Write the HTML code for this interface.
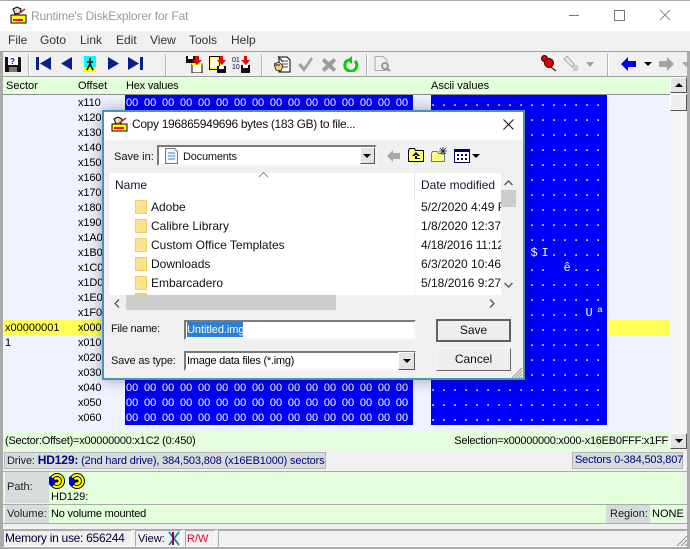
<!DOCTYPE html>
<html><head><meta charset="utf-8"><style>
html,body{margin:0;padding:0;background:#f0f0f0}
#w{position:relative;width:690px;height:549px;overflow:hidden;background:#f0f0f0;font:11px/15px "Liberation Sans",sans-serif;color:#000}
#w div,#w svg{position:absolute}
.t{white-space:pre}
.m{top:33px;font-size:12px;color:#333;line-height:15px}
.o{left:78px;white-space:pre;letter-spacing:-.1px}
.hx{left:126px;color:#fff;white-space:pre;word-spacing:2.7px;width:287px;overflow:hidden}
.as{left:431px;width:176px;color:#fff;font:12px/15px "Liberation Mono",monospace;letter-spacing:3.8px;white-space:pre;overflow:hidden;text-indent:0}
.as span{position:relative;left:2px}
.sep{top:54px;height:23px;background:#b4b4b4;border-right:1px solid #fff;width:1px}
.lb{font-size:12px;line-height:15px;white-space:pre;color:#111}
.fold{left:135px;width:12px;height:14px;background:#ffe08c;border:1px solid #f2cc6e;box-sizing:border-box}
.sunk{background:#fff;box-sizing:border-box;border:2px solid;border-color:#7a7a7a #f6f6f6 #f6f6f6 #7a7a7a}
.btn{left:436px;width:75px;box-sizing:border-box;background:#eee;border:1px solid;border-color:#f8f8f8 #666 #666 #f8f8f8;text-align:center;font-size:12px;color:#111}
.drop{background:#e4e4e4;border:1px solid;border-color:#fff #555 #555 #fff;box-sizing:border-box}
.tri{width:0;height:0;border-left:4px solid transparent;border-right:4px solid transparent;border-top:4px solid #000}
.pn{top:530px;height:17px;box-sizing:border-box;border:1px solid;border-color:#aaa #fff #fff #aaa}
</style></head><body><div id="w">

<!-- title -->
<div style="left:0;top:0;width:690px;height:31px;background:#fff"></div>
<div style="left:0;top:0;width:690px;height:1px;background:#aaa"></div>
<svg style="left:10px;top:6px" width="17" height="18" viewBox="0 0 17 18"><rect x="1" y="9" width="15" height="8" fill="#ffff00" stroke="#000"/><rect x="3" y="13" width="10" height="2" fill="#e00"/><path d="M3 3l4-2 4 2-1 4-5 1z" fill="#ddd" stroke="#000"/><path d="M7 9l8-6" stroke="#c22" stroke-width="1.5"/></svg>
<div class="t" style="left:31px;top:9px;font-size:12px;color:#999;letter-spacing:-.17px">Runtime's DiskExplorer for Fat</div>
<div style="left:569px;top:15px;width:10px;height:1px;background:#777"></div>
<div style="left:614px;top:10px;width:9px;height:9px;border:1px solid #777"></div>
<svg style="left:659px;top:9px" width="12" height="12"><path d="M1 1l10 10M11 1L1 11" stroke="#888" fill="none"/></svg>

<!-- menu -->
<div class="m" style="left:8px">File</div><div class="m" style="left:40px">Goto</div><div class="m" style="left:80px">Link</div><div class="m" style="left:116px">Edit</div><div class="m" style="left:150px">View</div><div class="m" style="left:189px">Tools</div><div class="m" style="left:231px">Help</div>
<div style="left:0;top:51px;width:690px;height:1px;background:#a0a0a0"></div>

<!-- toolbar -->
<svg style="left:5px;top:56px" width="16" height="16" viewBox="0 0 16 16"><path d="M0 1h15l1 1v14H0z" fill="#111"/><rect x="3" y="1" width="10" height="8" fill="#fff"/><rect x="4" y="11" width="8" height="5" fill="#777"/><text x="5" y="8" font-size="8" font-weight="bold" fill="#00c" font-family="Liberation Sans">?</text></svg>
<div class="sep" style="left:28px"></div>
<svg style="left:36px;top:57px" width="16" height="13"><path d="M0 0h3v13H0zM15 0v13L4 6.5z" fill="#0a1f8f"/></svg>
<svg style="left:61px;top:57px" width="12" height="13"><path d="M11 0v13L0 6.5z" fill="#0a1f8f"/></svg>
<svg style="left:84px;top:56px" width="12" height="16"><rect width="12" height="11" fill="#0ff"/><rect y="11" width="12" height="5" fill="#ff0"/><path d="M6 2v6M6 8l-3 6M6 8l3 6M3 6h6" stroke="#000" stroke-width="1.6" fill="none"/></svg>
<svg style="left:107px;top:57px" width="12" height="13"><path d="M1 0v13L12 6.5z" fill="#0a1f8f"/></svg>
<svg style="left:128px;top:57px" width="16" height="13"><path d="M0 0v13L11 6.5zM12 0h3v13h-3z" fill="#0a1f8f"/></svg>
<div class="sep" style="left:165px"></div>
<svg style="left:186px;top:56px" width="17" height="17"><rect x="0" y="0" width="9" height="7" fill="#111"/><rect x="2" y="0" width="5" height="3" fill="#fff"/><rect x="6" y="8" width="10" height="9" fill="#fff" stroke="#000"/><rect x="6" y="7" width="10" height="2" fill="#ff0"/><path d="M9 0h4v4h3l-5 5-5-5h3z" fill="#e00"/></svg>
<svg style="left:209px;top:56px" width="17" height="17"><rect x=".5" y="1.5" width="9" height="11" fill="#fff" stroke="#ff0" stroke-width="2"/><rect x=".5" y=".5" width="10" height="13" fill="none" stroke="#000"/><rect x="8" y="10" width="9" height="7" fill="#111"/><rect x="10" y="10" width="5" height="3" fill="#fff"/><path d="M11 0h3v4h3l-4 5-5-5h3z" fill="#e00"/></svg>
<svg style="left:232px;top:56px" width="18" height="17"><text x="0" y="6" font-size="7" fill="#005" font-family="Liberation Sans">01</text><text x="0" y="13" font-size="7" fill="#005" font-family="Liberation Sans">10</text><rect x="9" y="9" width="9" height="8" fill="#111"/><rect x="11" y="9" width="5" height="3" fill="#fff"/><path d="M12 0h3v4h3l-4 5-5-5h3z" fill="#e00"/></svg>
<div class="sep" style="left:261px"></div>
<svg style="left:274px;top:56px" width="17" height="17"><path d="M5 1h8l3 3v12H5z" fill="#fff" stroke="#000"/><path d="M7 5h7M8 8h6M8 11h6" stroke="#444"/><path d="M0 8l5-2 4 4-2 5-5-1z" fill="#fc6" stroke="#000" stroke-width=".7"/><path d="M1 9h5" stroke="#00c"/><path d="M4 0l5 6" stroke="#333" stroke-width="1.2"/></svg>
<svg style="left:297px;top:57px" width="17" height="15"><path d="M1 8l3-2 3 4 7-10 2 2-9 13z" fill="#a3a3a3"/></svg>
<svg style="left:322px;top:57px" width="14" height="15"><path d="M2 1l5 4 5-4 2 3-4 4 4 4-2 3-5-4-5 4-2-3 4-4-4-4z" fill="#9c9c9c"/></svg>
<svg style="left:343px;top:56px" width="16" height="16"><path d="M5 4a6 6 0 1 0 7 1" fill="none" stroke="#08d008" stroke-width="3"/><path d="M9 0v8l-5-4z" fill="#08d008"/></svg>
<div class="sep" style="left:366px"></div>
<svg style="left:374px;top:56px" width="17" height="16"><path d="M1 .5h8l4 4v10H1z" fill="#f0f0f0" stroke="#aaa"/><circle cx="11" cy="10" r="3" fill="none" stroke="#999" stroke-width="2"/><path d="M13 12l3 3" stroke="#999" stroke-width="2"/></svg>
<svg style="left:541px;top:55px" width="16" height="17"><circle cx="3.500" cy="3.500" r="3" fill="#d00" stroke="#300"/><circle cx="8" cy="8" r="4.500" fill="#d00" stroke="#300"/><path d="M10 12l5 4" stroke="#222" stroke-width="1.200"/></svg>
<svg style="left:563px;top:56px" width="16" height="16"><path d="M1 3l3-3 7 8-2 3z" fill="#e8e8e8" stroke="#aaa"/><path d="M10 9h5v6h-5z" fill="#bbb" opacity=".7"/></svg>
<div class="tri" style="left:586px;top:62px;border-top:5px solid #a0a0a0"></div>
<div class="sep" style="left:607px"></div>
<svg style="left:621px;top:57px" width="15" height="14"><path d="M7 0v4h8v6H7v4L0 7z" fill="#0000f0"/></svg>
<div class="tri" style="left:644px;top:62px"></div>
<svg style="left:659px;top:57px" width="15" height="14"><path d="M8 0v4H0v6h8v4l7-7z" fill="#a5a5a5"/></svg>
<div class="tri" style="left:682px;top:62px;border-top:5px solid #aaa"></div>

<!-- header -->
<div style="left:0;top:76px;width:690px;height:1px;background:#a0a0a0"></div>
<div style="left:3px;top:77px;width:667px;height:17px;background:#e2fedb"></div>
<div style="left:3px;top:94px;width:667px;height:1px;background:#8d8d8d"></div>
<div class="t" style="left:6px;top:79px">Sector</div>
<div class="t" style="left:78px;top:79px">Offset</div>
<div class="t" style="left:126px;top:79px;letter-spacing:-.2px">Hex values</div>
<div class="t" style="left:431px;top:79px">Ascii values</div>

<!-- data area -->
<div style="left:3px;top:95px;width:667px;height:337px;background:#eff2ff"></div>
<div style="left:3px;top:320px;width:667px;height:16px;background:#ffff55"></div>
<div style="left:125px;top:95px;width:288px;height:330px;background:#0000f8"></div>
<div style="left:431px;top:95px;width:176px;height:330px;background:#0000f8"></div>
<div class="t" style="left:5px;top:321px">x00000001</div>
<div class="t" style="left:5px;top:336px">1</div>

<div class="o" style="top:96px">x110</div><div class="o" style="top:111px">x120</div><div class="o" style="top:126px">x130</div><div class="o" style="top:141px">x140</div><div class="o" style="top:156px">x150</div><div class="o" style="top:171px">x160</div><div class="o" style="top:186px">x170</div><div class="o" style="top:201px">x180</div><div class="o" style="top:216px">x190</div><div class="o" style="top:231px">x1A0</div><div class="o" style="top:246px">x1B0</div><div class="o" style="top:261px">x1C0</div><div class="o" style="top:276px">x1D0</div><div class="o" style="top:291px">x1E0</div><div class="o" style="top:306px">x1F0</div><div class="o" style="top:321px">x000</div><div class="o" style="top:336px">x010</div><div class="o" style="top:351px">x020</div><div class="o" style="top:366px">x030</div><div class="o" style="top:381px">x040</div><div class="o" style="top:396px">x050</div><div class="o" style="top:411px">x060</div>

<div class="hx" style="top:96px">00 00 00 00 00 00 00 00 00 00 00 00 00 00 00 00</div>
<div class="hx" style="top:381px">00 00 00 00 00 00 00 00 00 00 00 00 00 00 00 00</div>
<div class="hx" style="top:396px">00 00 00 00 00 00 00 00 00 00 00 00 00 00 00 00</div>
<div class="hx" style="top:411px">00 00 00 00 00 00 00 00 00 00 00 00 00 00 00 00</div>

<div class="as" style="top:96px;left:429.500px;width:177.500px;padding:0">................
................
................
................
................
................
................
................
................
................
.........<span>$I</span>.....
........... <span>ê</span>...
................
................
..............<span>Uª</span>
................
................
................
................
................
................
................</div>

<!-- right scrollbar -->
<div style="left:670px;top:77px;width:17px;height:372px;background:#f4f4f4"></div>
<div class="drop" style="left:670px;top:77px;width:17px;height:16px"></div>
<div class="tri" style="left:675px;top:83px;border-top:0;border-bottom:4px solid #000"></div>
<div class="drop" style="left:670px;top:94px;width:17px;height:17px;background:#eee"></div>
<div style="left:687px;top:52px;width:3px;height:497px;background:#aaa"></div>
<div style="left:0;top:52px;width:3px;height:497px;background:#aaa"></div>

<!-- status top -->
<div style="left:3px;top:432px;width:667px;height:17px;background:#e2fedb"></div>
<div class="t" style="left:5px;top:434px;letter-spacing:-.22px">(Sector:Offset)=x00000000:x1C2 (0:450)</div>
<div class="t" style="right:22px;top:434px;letter-spacing:-.25px">Selection=x00000000:x000-x16EB0FFF:x1FF</div>
<div class="drop" style="left:670px;top:433px;width:17px;height:16px"></div>
<div class="tri" style="left:675px;top:439px"></div>

<!-- drive -->
<div style="left:4px;top:452px;width:322px;height:17px;background:#d6dbdc;border:1px solid #b5b5b5;box-sizing:border-box"></div>
<div class="t" style="left:7px;top:453px;color:#222;letter-spacing:-.15px">Drive: <b style="font-size:12px;color:#000080">HD129:</b> <span style="color:#000080">(2nd hard drive), 384,503,808 (x16EB1000) sectors</span></div>
<div style="left:572px;top:452px;width:111px;height:17px;background:#d6dbdc;border:1px solid #b5b5b5;box-sizing:border-box"></div>
<div class="t" style="left:575px;top:453px;color:#000080;letter-spacing:-.15px">Sectors 0-384,503,807</div>

<div style="left:3px;top:471px;width:684px;height:1px;background:#aaa"></div>
<div style="left:3px;top:472px;width:680px;height:31px;background:#e2fedb"></div>
<div style="left:5px;top:472px;width:44px;height:31px;background:#d6dbdc"></div>
<div class="t" style="left:7px;top:480px;color:#222">Path:</div>
<svg style="left:49px;top:473px" width="16" height="16"><circle cx="8" cy="8" r="7.5" fill="#ff0" stroke="#000"/><circle cx="8" cy="8" r="4.5" fill="none" stroke="#000"/><path d="M8 8L1 3A7.5 7.5 0 0 0 3 14z" fill="#0000c0"/><circle cx="8" cy="8" r="1.5" fill="#000"/></svg>
<svg style="left:69px;top:473px" width="16" height="16"><circle cx="8" cy="8" r="7.5" fill="#ff0" stroke="#000"/><circle cx="8" cy="8" r="4.5" fill="none" stroke="#000"/><path d="M8 8L1 3A7.5 7.5 0 0 0 3 14z" fill="#0000c0"/><circle cx="8" cy="8" r="1.5" fill="#000"/></svg>
<div class="t" style="left:51px;top:490px">HD129:</div>

<div style="left:3px;top:504px;width:684px;height:1px;background:#aaa"></div>
<div style="left:3px;top:505px;width:681px;height:18px;background:#e2fedb"></div>
<div style="left:5px;top:505px;width:44px;height:18px;background:#d6dbdc"></div>
<div class="t" style="left:7px;top:507px;color:#222">Volume:</div>
<div class="t" style="left:51px;top:507px;letter-spacing:-.2px">No volume mounted</div>
<div style="left:606px;top:505px;width:44px;height:18px;background:#d6dbdc"></div>
<div class="t" style="left:610px;top:507px;color:#222">Region:</div>
<div class="t" style="left:652px;top:507px">NONE</div>
<div style="left:3px;top:523px;width:684px;height:1px;background:#aaa"></div>
<div style="left:3px;top:529px;width:684px;height:1px;background:#aaa"></div>

<!-- status bar -->
<div class="pn" style="left:3px;width:129px"></div><div class="t" style="left:5px;top:531px;color:#003;font-size:12px;letter-spacing:-.28px">Memory in use: 656244</div>
<div class="pn" style="left:135px;width:47px"></div><div class="t" style="left:138px;top:532px;color:#003">View:</div>
<svg style="left:167px;top:531px" width="14" height="15"><path d="M2 1l10 13M12 1L2 14" stroke="#008080" stroke-width="1.5"/><path d="M6 1v13" stroke="#800080" stroke-width="2"/></svg>
<div class="pn" style="left:185px;width:30px"></div><div class="t" style="left:187px;top:532px;color:#f00030">R/W</div>
<div class="pn" style="left:218px;width:469px"></div>
<svg style="left:676px;top:535px" width="12" height="12"><path d="M11 1L1 11M11 5L5 11M11 9L9 11" stroke="#999"/></svg>
<div style="left:0;top:547px;width:690px;height:2px;background:#aaa"></div>

<!-- dialog -->
<div style="left:102px;top:110px;width:423px;height:270px;box-sizing:border-box;background:#f0f0f0;border:2px solid #4b93bd;box-shadow:0 0 14px rgba(0,0,0,.35)"></div>
<div style="left:104px;top:112px;width:419px;height:28px;background:#fff"></div>
<svg style="left:111px;top:116px" width="17" height="16" viewBox="0 0 17 16"><rect x="1" y="8" width="15" height="7" fill="#ffff00" stroke="#000"/><rect x="3" y="11" width="10" height="2" fill="#e00"/><path d="M3 3l4-2 4 2-1 4-5 1z" fill="#ddd" stroke="#000"/><path d="M7 8l8-6" stroke="#c22" stroke-width="1.5"/></svg>
<div class="lb" style="left:132px;top:117px;letter-spacing:-.33px">Copy 196865949696 bytes (183 GB) to file...</div>
<svg style="left:503px;top:119px" width="11" height="11"><path d="M.5.5l10 10M10.5.5l-10 10" stroke="#111" fill="none"/></svg>

<div class="lb" style="left:114px;top:150px;font-size:11px">Save in:</div>
<div class="sunk" style="left:157px;top:145px;width:220px;height:21px"></div>
<svg style="left:165px;top:148px" width="13" height="16"><path d="M.5.5h9l3 3v12H.5z" fill="#f4f6fa" stroke="#777"/><path d="M3 5h7M3 8h7M3 11h7" stroke="#3a8ad0"/></svg>
<div class="lb" style="left:183px;top:150px;font-size:11px;letter-spacing:-.2px">Documents</div>
<div class="drop" style="left:360px;top:147px;width:15px;height:17px"></div>
<div class="tri" style="left:363px;top:154px"></div>
<svg style="left:387px;top:150px" width="13" height="12"><path d="M6 0v3h7v6H6v3L0 6z" fill="#a8a8a8"/></svg>
<svg style="left:408px;top:148px" width="16" height="14"><path d="M.5 13.5V2.5l1-2h5l1 2h8v11z" fill="#ffff80" stroke="#000"/><path d="M8 4L4 8h8zM7 7h2v3h3v1H7z" fill="#000"/></svg>
<svg style="left:431px;top:147px" width="17" height="15"><path d="M.5 14.5V6.5l1-2h5l1 2h6v8z" fill="#ffff80" stroke="#777"/><path d="M12 0v8M8 4h8M9 1l6 6M15 1L9 7" stroke="#222" stroke-width=".8"/></svg>
<svg style="left:454px;top:149px" width="27" height="14"><rect x=".5" y=".5" width="15" height="13" fill="#fff" stroke="#00006a"/><rect x="1" y="1" width="14" height="2" fill="#00006a"/><path d="M3 5h2v2H3zM7 5h2v2H7zM11 5h2v2h-2zM3 9h2v2H3zM7 9h2v2H7zM11 9h2v2h-2z" fill="#00006a"/><path d="M18 5h8l-4 4z" fill="#000"/></svg>

<!-- list -->
<div style="left:109px;top:173px;width:392px;height:122px;background:#fff;overflow:hidden"></div>
<div style="left:414px;top:173px;width:1px;height:25px;background:#e2e2e2"></div>
<div style="left:414px;top:198px;width:1px;height:97px;background:#f0f3ff"></div>
<div class="lb" style="left:115px;top:178px;color:#201030">Name</div>
<svg style="left:258px;top:171px" width="11" height="7"><path d="M1 6l4.500-4.500L10 6" stroke="#888" fill="none"/></svg>
<div class="lb" style="left:421px;top:178px;color:#201030">Date modified</div>

<div class="fold" style="top:200px"></div><div class="lb" style="left:151px;top:200px">Adobe</div>
<div class="fold" style="top:219px"></div><div class="lb" style="left:151px;top:219px">Calibre Library</div>
<div class="fold" style="top:238px"></div><div class="lb" style="left:151px;top:238px">Custom Office Templates</div>
<div class="fold" style="top:257px"></div><div class="lb" style="left:151px;top:257px">Downloads</div>
<div class="fold" style="top:276px"></div><div class="lb" style="left:151px;top:276px">Embarcadero</div>
<div class="fold" style="top:293px;height:2px"></div>

<div class="lb" style="left:421px;top:200px;width:80px;overflow:hidden">5/2/2020 4:49 PM</div>
<div class="lb" style="left:421px;top:219px;width:80px;overflow:hidden">1/8/2020 12:37 PM</div>
<div class="lb" style="left:421px;top:238px;width:80px;overflow:hidden;letter-spacing:-.2px">4/18/2016 11:12 AM</div>
<div class="lb" style="left:421px;top:257px;width:80px;overflow:hidden">6/3/2020 10:46 AM</div>
<div class="lb" style="left:421px;top:276px;width:80px;overflow:hidden">5/18/2016 9:27 AM</div>

<!-- scrollbars -->
<div style="left:501px;top:173px;width:15px;height:122px;background:#f0f0f0"></div>
<div style="left:501px;top:190px;width:15px;height:17px;background:#cdcdcd"></div>
<svg style="left:504px;top:180px" width="9" height="6"><path d="M.5 5l4-4 4 4" stroke="#606060" stroke-width="1.500" fill="none"/></svg>
<svg style="left:504px;top:282px" width="9" height="6"><path d="M.5 1l4 4 4-4" stroke="#606060" stroke-width="1.500" fill="none"/></svg>
<div style="left:109px;top:295px;width:407px;height:15px;background:#f0f0f0"></div>
<div style="left:126px;top:295px;width:210px;height:15px;background:#cdcdcd"></div>
<svg style="left:114px;top:299px" width="6" height="9"><path d="M5 .5l-4 4 4 4" stroke="#606060" stroke-width="1.500" fill="none"/></svg>
<svg style="left:489px;top:299px" width="6" height="9"><path d="M1 .5l4 4-4 4" stroke="#606060" stroke-width="1.500" fill="none"/></svg>

<div class="lb" style="left:111px;top:322px;font-size:11px;letter-spacing:-.25px">File name:</div>
<div class="sunk" style="left:184px;top:320px;width:232px;height:20px"></div>
<div style="left:187px;top:322px;width:56px;height:15px;background:#2a7fd6"></div>
<div class="t" style="left:187px;top:323px;color:#fff;font-size:11px;letter-spacing:-.05px">Untitled.img</div>
<div class="lb" style="left:111px;top:354px;font-size:11px;letter-spacing:-.15px">Save as type:</div>
<div class="sunk" style="left:184px;top:351px;width:232px;height:20px"></div>
<div class="t" style="left:187px;top:354px;font-size:11px;letter-spacing:-.25px">Image data files (*.img)</div>
<div class="drop" style="left:398px;top:352px;width:17px;height:18px"></div>
<div class="tri" style="left:403px;top:359px"></div>

<div class="btn" style="top:319px;height:23px;line-height:19px;border:2px solid;border-color:#606060">Save</div>
<div class="btn" style="top:348px;height:23px;line-height:21px">Cancel</div>
<svg style="left:511px;top:367px" width="12" height="12"><path d="M11 1L1 11M11 4L4 11M11 7L7 11M11 10L10 11" stroke="#999"/></svg>

</div></body></html>
